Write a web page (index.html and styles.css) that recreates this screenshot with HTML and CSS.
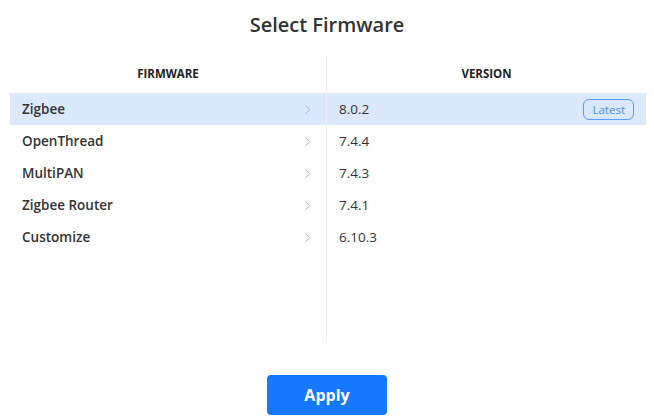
FILE: index.html
```html
<!DOCTYPE html>
<html lang="en">
<head>
	<meta charset="UTF-8">
	<title>Select Firmware</title>
	<link rel="stylesheet" href="styles.css">
</head>
<body>
	<h2 class="title">Select Firmware</h2>
<!-- 两列：固件 / 版本 -->
	<div class="table">
		<div class="col col-firmware">
			<div class="head">FIRMWARE</div>
			<div class="row active"><span>Zigbee</span><svg class="arrow" viewBox="0 0 6 9"><polyline points="0.5,0.5 5,4.5 0.5,8.5"/></svg></div>
			<div class="row"><span>OpenThread</span><svg class="arrow" viewBox="0 0 6 9"><polyline points="0.5,0.5 5,4.5 0.5,8.5"/></svg></div>
			<div class="row"><span>MultiPAN</span><svg class="arrow" viewBox="0 0 6 9"><polyline points="0.5,0.5 5,4.5 0.5,8.5"/></svg></div>
			<div class="row"><span>Zigbee Router</span><svg class="arrow" viewBox="0 0 6 9"><polyline points="0.5,0.5 5,4.5 0.5,8.5"/></svg></div>
			<div class="row"><span>Customize</span><svg class="arrow" viewBox="0 0 6 9"><polyline points="0.5,0.5 5,4.5 0.5,8.5"/></svg></div>
		</div>
		<div class="col col-version">
			<div class="head">VERSION</div>
			<div class="row active"><span>8.0.2</span><em class="tag">Latest</em></div>
			<div class="row"><span>7.4.4</span></div>
			<div class="row"><span>7.4.3</span></div>
			<div class="row"><span>7.4.1</span></div>
			<div class="row"><span>6.10.3</span></div>
		</div>
	</div>
<!-- 底部按钮 -->
	<div class="footer">
		<button class="btn">Apply</button>
	</div>
</body>
</html>
```

FILE: styles.css
```css
*{
	margin:0;
	padding:0;
	box-sizing: border-box;
}
body{
	background-color: #fff;
	color: #333;
	font-family: "Open Sans", "Noto Sans", sans-serif;
}
.title{
	height: 55px;
	padding-top: 8px;
	text-align: center;
	font-size: 20px;
	font-weight: 600;
	color: #333;
	line-height: 34px;
}
.table{
	display: grid;
	grid-template-columns: 317px 1fr;
	height: 288px;
	margin: 0 8px 0 10px;
}
.col{
	display: flex;
	flex-direction: column;
}
.col-firmware{
	border-right: 1px solid #f0f0f0;
}
.head{
	height: 38px;
	line-height: 38px;
	text-align: center;
	font-size: 11.5px;
	font-weight: 700;
	color: #222;
}
.row{
	display: flex;
	align-items: center;
	justify-content: space-between;
	height: 32px;
	padding: 0 12px;
	font-size: 13.5px;
	color: #333;
}
.col-firmware .row{
	padding-right: 15px;
	font-weight: 600;
}
.row.active{
	background-color: #dbe8fd;
}
.arrow{
	width: 6px;
	height: 9px;
	fill: none;
	stroke: #b8b8b8;
	stroke-width: 1;
}
.tag{
	font-style: normal;
	font-size: 11.5px;
	line-height: 19px;
	height: 21px;
	padding: 0 8px;
	color: #4d8ef5;
	border: 1px solid #5b9cf8;
	border-radius: 6px;
}
.footer{
	display: flex;
	justify-content: center;
	padding-top: 32px;
}
.btn{
	width: 120px;
	height: 40px;
	border: none;
	border-radius: 4px;
	background-color: #1677ff;
	color: #fff;
	font-family: inherit;
	font-size: 16px;
	font-weight: 700;
}
```
